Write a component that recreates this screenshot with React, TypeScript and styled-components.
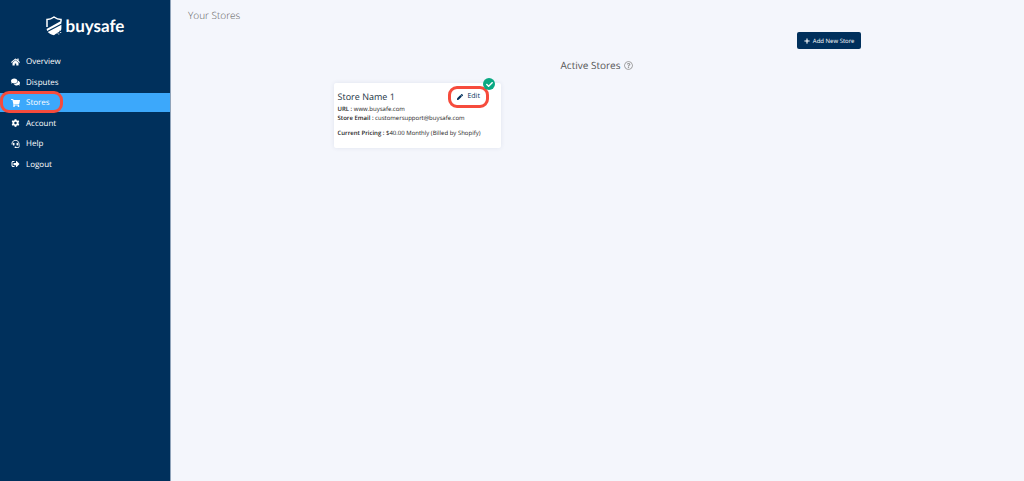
import React from 'react';
import styled, { createGlobalStyle } from 'styled-components';
import type { IconType } from 'react-icons';
import {
  FaHome,
  FaComments,
  FaShoppingCart,
  FaCog,
  FaHeadset,
  FaSignOutAlt,
  FaPlus,
  FaPen,
  FaCheck,
  FaRegQuestionCircle,
} from 'react-icons/fa';

const navy = '#00305c';
const highlight = '#f64b3c';

const GlobalStyle = createGlobalStyle`
  *, *::before, *::after { box-sizing: border-box; }
  body {
    margin: 0;
    background: #f4f6fc;
    color: #333;
    font-family: 'Open Sans', 'Noto Sans', sans-serif;
    text-rendering: geometricPrecision;
  }
  button { text-rendering: inherit; }
`;

const Shell = styled.div`
  display: flex;
  min-height: 100vh;
`;

const Sidebar = styled.aside`
  flex: 0 0 171px;
  background: ${navy};
  border-right: 1px solid #8fa3ba;
`;

const Brand = styled.a`
  display: flex;
  align-items: center;
  justify-content: center;
  gap: 4px;
  height: 52px;
  color: #fff;
  font: 700 17px/24px Lato, 'Open Sans', sans-serif;
  text-decoration: none;
`;

const NavList = styled.ul`
  display: flex;
  flex-direction: column;
  justify-content: space-between;
  height: 122px;
  margin: 0;
  padding: 0;
  list-style: none;
`;

const NavItem = styled.li<{ $active?: boolean }>`
  position: relative;
  background: ${(p) => (p.$active ? '#3ca8fb' : 'transparent')};
`;

const NavLink = styled.a`
  display: flex;
  align-items: center;
  gap: 6px;
  padding-left: 11px;
  color: #fff;
  font-size: 8px;
  font-weight: 500;
  line-height: 19px;
  text-decoration: none;

  svg { width: 9px; height: 8px; }
`;

const NavMarker = styled.span`
  position: absolute;
  inset: -2px auto -1px 0;
  width: 63px;
  border: 3px solid ${highlight};
  border-radius: 9px;
  pointer-events: none;
`;

const Main = styled.main`
  flex: 1;
  min-width: 0;
  padding: 7px 18px 8px 17px;
`;

const PageTitle = styled.h1`
  margin: 0;
  color: #555;
  font-size: 10px;
  font-weight: 300;
  line-height: 16px;
`;

const Content = styled.div`
  max-width: 527px;
  margin: 9px auto 0;
`;

const Toolbar = styled.div`
  display: flex;
  justify-content: flex-end;
`;

const AddButton = styled.button`
  display: flex;
  align-items: center;
  gap: 3px;
  height: 17px;
  padding: 0 6px 0 7px;
  border: 0;
  border-radius: 2px;
  background: ${navy};
  color: #fff;
  font: 400 6px/16px 'Open Sans', sans-serif;
`;

const SectionTitle = styled.h2`
  display: flex;
  align-items: center;
  justify-content: center;
  gap: 4px;
  margin: 8px 0 10px;
  color: #555;
  font-size: 10px;
  font-weight: 400;
  line-height: 16px;

  svg { color: #999; }
`;

const StoreGrid = styled.div`
  display: grid;
  grid-template-columns: repeat(auto-fill, minmax(160px, 1fr));
  gap: 12px;
`;

const StoreCard = styled.article`
  position: relative;
  min-height: 65px;
  padding: 6px 4px 4px;
  border-radius: 2px;
  background: #fff;
  box-shadow: 0 0 4px rgba(40, 60, 110, 0.1);
`;

const CardHead = styled.header`
  display: flex;
  align-items: center;
  justify-content: space-between;
  height: 16px;
`;

const StoreName = styled.h3`
  margin: 0;
  color: #234;
  font-size: 9px;
  font-weight: 400;
  line-height: 16px;
`;

const EditButton = styled.button`
  display: flex;
  align-items: center;
  justify-content: center;
  gap: 4px;
  width: 41px;
  height: 22px;
  margin-right: 8px;
  padding: 0;
  border: 3px solid ${highlight};
  border-radius: 9px;
  background: #fff;
  color: ${navy};
  font: 400 7px/16px 'Open Sans', sans-serif;
`;

const StatusBadge = styled.span`
  position: absolute;
  top: -5px;
  right: 6px;
  display: grid;
  place-items: center;
  width: 12px;
  height: 12px;
  border-radius: 50%;
  background: #0aa982;
  color: #fff;
`;

const Detail = styled.p<{ $spaced?: boolean }>`
  margin: ${(p) => (p.$spaced ? '6px' : '0')} 0 0;
  color: #222;
  font-size: 6px;
  line-height: 9px;
  white-space: nowrap;

  b { font-weight: 600; }
`;

const navItems: { label: string; icon: IconType; active?: boolean }[] = [
  { label: 'Overview', icon: FaHome },
  { label: 'Disputes', icon: FaComments },
  { label: 'Stores', icon: FaShoppingCart, active: true },
  { label: 'Account', icon: FaCog },
  { label: 'Help', icon: FaHeadset },
  { label: 'Logout', icon: FaSignOutAlt },
];

const ShieldLogo = () => (
  <svg width="16" height="20" viewBox="0 0 16 20" fill="none" aria-hidden="true">
    <path d="M1 11V3.600C4 3.500 6 2.500 8 1c2 1.500 4 2.500 7 2.600V5.500" stroke="#fff" strokeWidth="1.500" />
    <path d="M.6 13 15.400 4.800v2.700L1.100 15.100Z" fill="#fff" />
    <path d="M1.700 16 15.400 8.700v3.300c0 1.100-.2 2-.6 2.800h-1.500v1.400h-1.600v1.300h-1.500L8 19.300c-2.700-.8-4.900-1.800-6.300-3.300Z" fill="#fff" />
    <path d="M14.200 16h1v1h-1zM12.300 17.500h1v1h-1z" fill="#fff" />
  </svg>
);

export default function App() {
  return (
    <>
      <GlobalStyle />
      <Shell>
        <Sidebar>
          <Brand href="#">
            <ShieldLogo />
            buysafe
          </Brand>
          <nav>
            <NavList>
              {navItems.map(({ label, icon: Icon, active }) => (
                <NavItem key={label} $active={active}>
                  <NavLink href="#" aria-current={active ? 'page' : undefined}>
                    <Icon />
                    {label}
                  </NavLink>
                  {active && <NavMarker />}
                </NavItem>
              ))}
            </NavList>
          </nav>
        </Sidebar>
        <Main>
          <PageTitle>Your Stores</PageTitle>
          <Content>
            <Toolbar>
              <AddButton type="button">
                <FaPlus size={6} />
                Add New Store
              </AddButton>
            </Toolbar>
            <SectionTitle>
              Active Stores
              <FaRegQuestionCircle size={9} />
            </SectionTitle>
            <StoreGrid>
              <StoreCard>
                <StatusBadge role="img" aria-label="Active">
                  <FaCheck size={7} />
                </StatusBadge>
                <CardHead>
                  <StoreName>Store Name 1</StoreName>
                  <EditButton type="button">
                    <FaPen size={6} />
                    Edit
                  </EditButton>
                </CardHead>
                <Detail>
                  <b>URL :</b> www.buysafe.com
                </Detail>
                <Detail>
                  <b>Store Email :</b> customersupport@buysafe.com
                </Detail>
                <Detail $spaced>
                  <b>Current Pricing :</b> $40.00 Monthly (Billed by Shopify)
                </Detail>
              </StoreCard>
            </StoreGrid>
          </Content>
        </Main>
      </Shell>
    </>
  );
}
